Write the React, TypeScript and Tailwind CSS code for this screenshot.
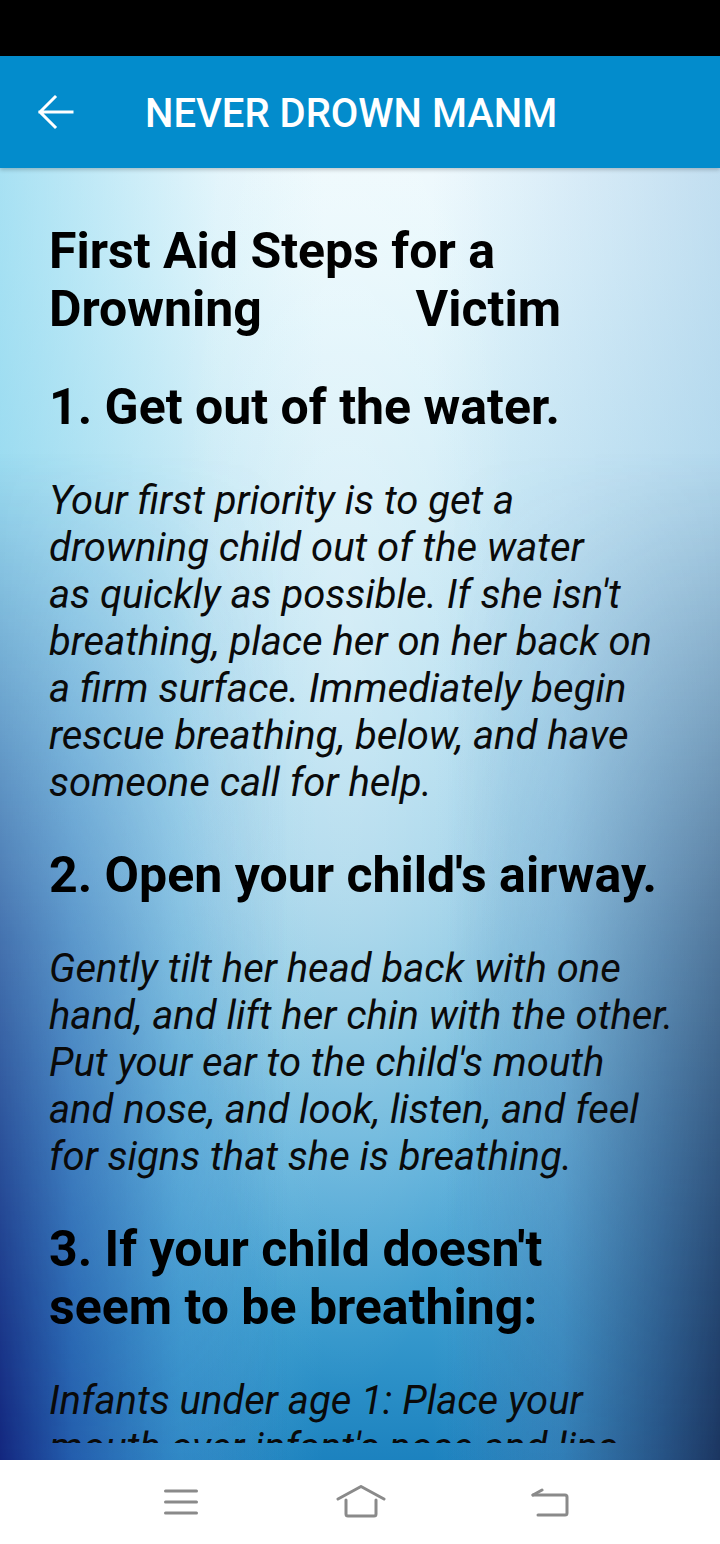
import React from "react";

const baseBg =
  "bg-[radial-gradient(ellipse_24%_60%_at_48%_35%,rgba(255,255,255,0.3)_0%,rgba(255,255,255,0)_100%),linear-gradient(to_right,rgba(110,205,235,0.55)_0%,rgba(160,220,240,0.15)_30%,rgba(0,0,0,0)_45%,rgba(0,0,0,0)_60%,rgba(150,195,230,0.25)_80%,rgba(140,190,225,0.45)_100%),linear-gradient(to_bottom,#eef9fd_0%,#e6f7fc_8%,#cdebf6_28%,#b2ddef_45%,#a3d4ea_55%,#86c6e2_66%,#5eb0da_78%,#3598cc_90%,#1c82bf_100%)]";

const edgeShade =
  "bg-[linear-gradient(to_right,#13267e_0%,rgba(25,70,160,0.75)_10%,rgba(40,110,190,0.3)_25%,rgba(0,0,0,0)_40%,rgba(0,0,0,0)_62%,rgba(35,90,150,0.35)_78%,rgba(30,65,115,0.8)_92%,#1b3560_100%)] [mask-image:linear-gradient(to_bottom,transparent_22%,rgba(0,0,0,0.55)_60%,black_100%)] [-webkit-mask-image:linear-gradient(to_bottom,transparent_22%,rgba(0,0,0,0.55)_60%,black_100%)]";

function Heading({ children, className = "" }: { children: React.ReactNode; className?: string }) {
  return (
    <h2 className={`text-[50px] leading-[58px] font-bold text-black ${className}`}>{children}</h2>
  );
}

function Para({ children }: { children: React.ReactNode }) {
  return <p className="mt-[41px] text-[40px] leading-[47px] italic text-[#0a0a0a]">{children}</p>;
}

export default function App() {
  return (
    <div className="w-[720px] h-[1544px] flex flex-col overflow-hidden bg-white" style={{ fontFamily: "Roboto, 'Noto Sans', sans-serif" }}>
      <div className="h-[56px] bg-black shrink-0" />
      <div className="h-[112px] bg-[#038ccc] flex items-center shrink-0 relative z-10 shadow-[0_2px_4px_rgba(0,0,0,0.2)]">
        <svg width="48" height="48" viewBox="0 0 48 48" className="ml-[32px]">
          <path d="M8 24H40M8 24L23 9M8 24L23 39" stroke="white" strokeWidth="3" fill="none" strokeLinecap="square" />
        </svg>
        <span className="ml-[65px] mt-[4px] text-white text-[40px] font-medium">NEVER DROWN MANM</span>
      </div>
      <div className={`h-[1292px] shrink-0 relative flex flex-col pb-[17px] ${baseBg}`}>
        <div className={`absolute inset-0 pointer-events-none ${edgeShade}`} />
        <div className="relative flex-1 overflow-hidden pl-[49px] pr-[44px] pt-[54px]">
          <Heading>
            First Aid Steps for a
            <span className="flex w-[512px] justify-between">
              <span>Drowning</span>
              <span>Victim</span>
            </span>
          </Heading>
          <Heading className="mt-[40px]">1. Get out of the water.</Heading>
          <Para>
            Your first priority is to get a drowning child out of the water
            <br />
            as quickly as possible. If she isn't breathing, place her on her back on a firm surface. Immediately begin rescue breathing, below, and have someone call for help.
          </Para>
          <Heading className="mt-[40px]">2. Open your child's airway.</Heading>
          <Para>
            Gently tilt her head back with one hand, and lift her chin with the other. Put your ear to the child's mouth and nose, and look, listen, and feel for signs that she is breathing.
          </Para>
          <Heading className="mt-[40px]">3. If your child doesn't seem to be breathing:</Heading>
          <Para>
            Infants under age 1: Place your mouth over infant's nose and lips
            <br />
            to create a seal, and give two gentle breaths.
          </Para>
        </div>
      </div>
      <div className="flex-1 bg-white flex items-center">
        <svg width="34" height="30" viewBox="0 0 34 30" className="ml-[164px]">
          <g stroke="#8a8a8a" strokeWidth="3" strokeLinecap="round">
            <line x1="1.5" y1="4" x2="32.5" y2="4" />
            <line x1="1.5" y1="15" x2="32.5" y2="15" />
            <line x1="1.5" y1="26" x2="32.5" y2="26" />
          </g>
        </svg>
        <svg width="50" height="34" viewBox="0 0 50 34" className="ml-[138px]">
          <g stroke="#8a8a8a" strokeWidth="3" fill="none" strokeLinecap="round" strokeLinejoin="round">
            <path d="M2 14L25 1.5L48 14" />
            <path d="M10 15V29Q10 31 12 31H38Q40 31 40 29V15" />
          </g>
        </svg>
        <svg width="38" height="32" viewBox="0 0 38 32" className="ml-[145px]">
          <g stroke="#8a8a8a" strokeWidth="3" fill="none" strokeLinecap="round" strokeLinejoin="round">
            <path d="M2 9L11 4" />
            <path d="M2 9H34Q36 9 36 11V27Q36 29 34 29H7" />
          </g>
        </svg>
      </div>
    </div>
  );
}
